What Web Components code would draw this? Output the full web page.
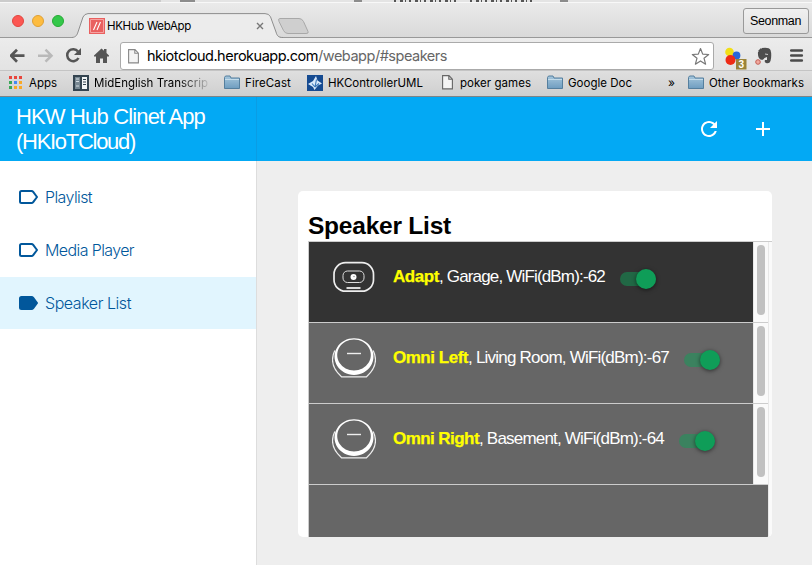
<!DOCTYPE html>
<html lang="en">
<head>
<meta charset="utf-8">
<title>HKHub WebApp</title>
<style>
html,body{margin:0;height:100%;overflow:hidden}
body{width:812px;height:565px;display:flex;flex-direction:column;font-family:Inter,"Liberation Sans",sans-serif;color:#111}
</style>
</head>
<body>
<browser-chrome></browser-chrome>
<hub-app></hub-app>
<script>
// Single-line text that spreads its letters to fill the width given in "w".
class FitText extends HTMLElement{
  connectedCallback(){
    if(!this.shadowRoot)this.attachShadow({mode:'open'}).innerHTML='<style>:host{display:block;flex:none;white-space:pre;width:max-content}</style><slot></slot>';
    this.fit();
    window.addEventListener('load',()=>this.fit());
  }
  fit(){
    this.style.letterSpacing='0px';
    this.style.width='max-content';
    const w=+this.getAttribute('w'),n=this.textContent.length,now=this.getBoundingClientRect().width;
    if(now)this.style.letterSpacing=((w-now)/n).toFixed(3)+'px';
    this.style.width=w+'px';
  }
}
customElements.define('fit-text',FitText);

function define(name,html){
  customElements.define(name,class extends HTMLElement{
    constructor(){super();this.attachShadow({mode:'open'}).innerHTML=typeof html==='function'?html(this):html;}
  });
}

define('folder-icon',`<style>:host{display:block;width:16px;height:15px}svg{display:block}</style>
<svg width="16" height="15" viewBox="0 0 16 15"><defs><linearGradient id="g" x2="0" y2="1"><stop stop-color="#a5c6dc"/><stop offset="1" stop-color="#6f9dc0"/></linearGradient></defs>
<path d="M.5 13.500v-11l1-1.500h4.500l1 2h8.500v10.500z" fill="url(#g)" stroke="#557f9e"/><path d="M1 4.500h14" stroke="#c4dcea"/></svg>`);

define('page-icon',`<style>:host{display:block;width:11px;height:15px}svg{display:block}</style>
<svg width="11" height="15" viewBox="0 0 11 15"><path d="M.6.6H7l3.400 3.500v9.800H.6zM6.800.6v3.700h3.600" fill="#f4f4f4" stroke="var(--ink,#666)" stroke-width="1.1"/></svg>`);

define('tab-strip',`<style>
:host{display:flex;height:38px;background:linear-gradient(#ececec,#d9d9d9);position:relative;box-sizing:border-box;border-bottom:1px solid #999;padding:3px 0 0 12px;align-items:flex-start}
.behind{position:absolute;left:0;top:0;width:812px;height:3px}
.lights{display:flex;gap:8px;margin-top:12px}
i{width:10px;height:10px;border-radius:50%;border:1px solid #e2463f;background:#fc5753}
i+i{background:#fdbc40;border-color:#dfa035}i+i+i{background:#34c84a;border-color:#27aa35}
.shape{position:absolute;left:72px;top:13px}
.tab{display:flex;align-items:center;margin:14px 0 0 25px;height:18px;position:relative}
fit-text{font-size:11.500px;line-height:18px;margin-left:2px;color:#000}
.x{margin-left:65px}
.user{position:absolute;left:743px;top:8px;width:64px;height:24px;border:1px solid #999;border-radius:3px;background:linear-gradient(#f0f0f0,#e1e1e1)}
.user fit-text{margin:1px 0 0 6px;font-size:12.500px;line-height:23px;font-family:"Liberation Sans",sans-serif}
</style>
<svg class="behind" width="812" height="3"><path d="M0 0h161v2H0z" fill="#ccc"/><path d="M161 0h651v2H161z" fill="#e4e4e4"/><path d="M180 0h15v2h-15zM354 0h8v2h-8zM560 0h8v2h-8z" fill="#8c8c8c"/><path d="M394 1h62M470 1h65" stroke="#555" stroke-width="2" stroke-dasharray="2 4 3 2 1 3"/><path d="M0 2.500h812" stroke="#f8f8f8"/></svg>
<div class="lights"><i></i><i></i><i></i></div>
<svg class="shape" width="240" height="26" viewBox="0 0 240 26">
<path d="M0 24.500C4 24.200 5 22 6 19L11 4Q12.500.8 16 .6H193q4 0 5.500 3.200L204 19c1 3.500 2 5.500 7 5.500V26H0z" fill="#ececec"/>
<path d="M0 24.500C4 24.200 5 22 6 19L11 4Q12.500.8 16 .6H193q4 0 5.500 3.200L204 19c1 3.500 2 5.500 7 5.500" fill="none" stroke="#8e8e8e"/>
<path d="M208 5.500h19q3 0 4.500 3l4.500 10q1 2-2 2h-18q-3 0-4.500-3l-4.500-9q-1.300-3 1-3z" fill="#cfcfcf" stroke="#a8a8a8"/></svg>
<div class="tab"><svg width="16" height="16" viewBox="0 0 16 16"><path d="M0 0h16v16H0z" fill="#e9605f"/><path d="M1.500 1.500h13v13h-13z" fill="none" stroke="#f5a3a2"/><path d="M4.500 12L8 4M8 12l3.500-8" stroke="#fff" stroke-width="1.100"/></svg>
<fit-text w="84">HKHub WebApp</fit-text><svg class="x" width="8" height="8" viewBox="0 0 8 8"><path d="M1 1l6 6M7 1L1 7" stroke="#777" stroke-width="1.400"/></svg></div>
<div class="user"><fit-text w="51">Seonman</fit-text></div>`);

define('address-row',`<style>
:host{display:flex;height:32px;padding:3px 0 0 10px;background:linear-gradient(#ececec,#e3e3e3);align-items:flex-start;box-sizing:border-box}
.nav,.ext,.bar{flex:none}
.bar{display:flex;align-items:center;box-sizing:border-box;width:594px;height:28px;margin-top:1px;background:#fff;border:1px solid #aaa;border-radius:3px;padding:0 3px 0 7px}
page-icon{--ink:#888;margin-right:8px}
.url{display:flex;font-size:14.500px;line-height:24px;color:#000}
.path{color:#666}
.star{margin-left:auto}
.ext{margin-left:11px}
</style>
<svg class="nav" width="110" height="28" viewBox="10 41 110 28">
<path d="M24.500 55.700H11.500M17 49.700l-6 6 6 6" fill="none" stroke="#555" stroke-width="2.700"/>
<path d="M38 55.700h13M45.500 49.700l6 6-6 6" fill="none" stroke="#b9b9b9" stroke-width="2.500"/>
<path d="M78 51.500A6 6 0 1 0 78.500 58" fill="none" stroke="#555" stroke-width="2.500"/><path d="M81 48v7h-7z" fill="#555"/>
<path d="M94 55.500l7.500-7 2.500 2.300V49h2.500v4l2.500 2.500v1h-2V63h-4v-4.500h-3V63h-4v-6.500h-2z" fill="#555"/></svg>
<div class="bar"><page-icon></page-icon><div class="url"><fit-text w="171">hkiotcloud.herokuapp.com</fit-text><fit-text class="path" w="129">/webapp/#speakers</fit-text></div>
<svg class="star" width="19" height="19" viewBox="0 0 19 19"><path d="M9.500 1.500l2.200 5.600 6 .4-4.700 3.700 1.600 6-5.100-3.300-5.100 3.300 1.600-6L1.300 7.500l6-.4z" fill="#fff" stroke="#777" stroke-width="1.200" stroke-linejoin="round"/></svg></div>
<svg class="ext" width="84" height="30" viewBox="725 41 84 30">
<circle cx="729.500" cy="52" r="4.300" fill="#f1df17"/><circle cx="736.500" cy="55.500" r="3.900" fill="#2867d8"/><circle cx="730.500" cy="60" r="5" fill="#ee2b16"/>
<path d="M736 59h10.500v10.500H736z" fill="#9a8439"/><text x="738.500" y="68" font-size="10" font-weight="700" fill="#fff" font-family="Liberation Sans">3</text>
<path d="M758 52l4-4q7-1 8.500 2 1.500 5 0 11-1 3-4.500 2-2-1-1-3h2v-3l-2.500 1q-1 2.500-4 1.500-3-2-2.500-7.500z" fill="#4d4d4d"/><path d="M758 51l3-3v3z" fill="#4d4d4d"/><path d="M765 54l3 .5" stroke="#ccc"/><circle cx="758" cy="62" r="2.300" fill="#f0aaa0" stroke="#c45e54"/>
<path d="M791.300 50.500h10.500M791.300 55.500h10.500M791.300 60.500h10.500" stroke="#4b4b4b" stroke-width="2.700" stroke-linecap="round"/></svg>`);

define('bookmarks-bar',`<style>
:host{display:grid;grid-template-columns:73px 151px 83px 135px 105px 121px 20px 1fr;height:27px;box-sizing:border-box;padding:0 0 2px 9px;background:linear-gradient(#dfdfdf,#cfcfcf);border-top:1px solid #c4c4c4;border-bottom:1px solid #7e8486;align-items:center;font-size:11.500px;color:#000;line-height:20px}
div{display:flex;align-items:center}
.near{gap:5px;margin-left:-9px}
.fade{-webkit-mask-image:linear-gradient(90deg,#000 75%,rgba(0,0,0,.12))}
</style>
<div style="gap:7px"><svg width="13" height="13" viewBox="0 0 13 13"><path d="M0 0h3v3H0zM5 0h3v3H5zM10 0h3v3h-3z" fill="#e8453c"/><path d="M0 5h3v3H0z" fill="#3aa757"/><path d="M5 5h3v3H5z" fill="#4688f1"/><path d="M10 5h3v3h-3z" fill="#f9a825"/><path d="M0 10h3v3H0z" fill="#3aa757"/><path d="M5 10h3v3H5zM10 10h3v3h-3z" fill="#f9a825"/></svg><fit-text w="28">Apps</fit-text></div>
<div class="near"><svg width="16" height="16" viewBox="0 0 16 16"><path d="M0 0h16v16H0z" fill="#344450"/><path d="M2 2h5v12H2z" fill="#788893"/><path d="M9 2h5v12H9z" fill="#f1f4f5"/><path d="M3 4h3M3 6.500h3M3 11h3" stroke="#d5dde2"/><path d="M10 4.500h3M10 7h3M10 9.500h3" stroke="#344450"/></svg><fit-text class="fade" w="114">MidEnglish Transcrip</fit-text></div>
<div class="near"><folder-icon></folder-icon><fit-text w="46">FireCast</fit-text></div>
<div class="near"><svg width="16" height="16" viewBox="0 0 16 16"><path d="M0 0h16v16H0z" fill="#164b91"/><path d="M9 1l1.500 4.500 4.500 3-4 2-3.500 4.500-1.500-3-5-3 5-3z" fill="#d8e8fa"/><path d="M9.500 4.500L8 12M8 12L5 8.500M8 12l4-3.500" fill="none" stroke="#3976b8" stroke-width="1.100"/></svg><fit-text w="95">HKControllerUML</fit-text></div>
<div class="near" style="gap:7px"><page-icon></page-icon><fit-text w="71">poker games</fit-text></div>
<div class="near"><folder-icon></folder-icon><fit-text w="64">Google Doc</fit-text></div>
<div class="near"><fit-text style="font-size:12px" w="9">»</fit-text></div>
<div class="near"><folder-icon></folder-icon><fit-text w="95">Other Bookmarks</fit-text></div>`);

define('browser-chrome',`<style>:host{display:flex;flex-direction:column;height:97px;flex:none}</style>
<tab-strip></tab-strip><address-row></address-row><bookmarks-bar></bookmarks-bar>`);

define('nav-item',el=>`<style>
:host{display:flex;height:52px;align-items:center;padding-left:19px;gap:7px;color:#01579b;font-size:16px;font-weight:300;line-height:24px}
:host([active]){background:#e1f5fe}svg{display:block;flex:none}
</style><svg width="19" height="14" viewBox="0 0 19 14"><path d="M2.500 1h10q1 0 1.700.9L18 7l-3.800 5.100q-.7.9-1.700.9h-10Q1 13 1 11.500v-9Q1 1 2.500 1z" fill="${el.hasAttribute('active')?'#01579b':'none'}" stroke="#01579b" stroke-width="2"/></svg><slot></slot>`);

define('power-toggle',`<style>:host{display:flex;align-items:center;width:36px;height:20px}
.track{width:36px;height:14px;border-radius:7px;background:rgba(15,157,88,.5);display:flex;align-items:center;justify-content:flex-end}
.knob{width:20px;height:20px;border-radius:50%;background:#0f9d58;box-shadow:0 1px 4px rgba(0,0,0,.55);flex:none}</style><div class="track"><div class="knob"></div></div>`);

const art={
adapt:`<rect x="2" y="5.700" width="39.500" height="28.500" rx="11.500" fill="none" stroke="#eee" stroke-width="1.700"/><rect x="11" y="14" width="21" height="11.500" rx="4.500" fill="none" stroke="#ddd" stroke-width="1"/><circle cx="21.500" cy="20" r="3" fill="#fff"/><circle cx="22" cy="19.500" r=".7" fill="#888"/><path d="M14.500 31h14" stroke="#eee" stroke-width="1.800"/>`,
omni:`<path fill-rule="evenodd" d="M22 .2a19.500 18.400 0 1 1-.01 0zM22 1.500a16.800 15.500 0 1 0 .01 0z" fill="#fff"/><path d="M2.800 12.500Q-4 26.500 9.500 38.800h25Q48 26.500 41.200 12.500" fill="none" stroke="#eee" stroke-width="1.200"/><path d="M15 15.500h14" stroke="#eee" stroke-width="1.400"/>`};

define('speaker-row',el=>`<style>
:host{display:grid;grid-template-columns:444px 15px;height:80px;border-bottom:1px solid #ccc;background:#666;color:#fff}
:host([selected]){background:#333}
.body{display:flex;align-items:flex-start;padding:15px 0 0 23px}
svg{flex:none}
.label{display:flex;margin:8px 15px 0 17px;font:17px/24px "Liberation Sans",sans-serif}
.name{color:#ff0;font-weight:700;-webkit-text-stroke:.25px #ff0}
power-toggle{margin-top:12px}
.scroll{background:#fafafa;border-left:1px solid #e8e8e8;box-sizing:border-box;padding:3px 0 0 3px}
.thumb{width:8px;height:70px;border-radius:4px;background:#c1c1c1}
</style><div class="body"><svg width="44" height="42" viewBox="0 0 44 42">${art[el.getAttribute('kind')]}</svg>
<div class="label"><fit-text class="name" w="${el.getAttribute('name-width')}">${el.getAttribute('name')}</fit-text><fit-text w="${el.getAttribute('info-width')}">${el.getAttribute('info')}</fit-text></div><power-toggle></power-toggle></div>
<div class="scroll"><div class="thumb"></div></div>`);

define('speaker-card',`<style>
:host{display:flex;flex-direction:column;box-sizing:border-box;width:474px;height:346px;margin:30px 0 0 41px;padding:20px 0 0 10px;background:#fff;border-radius:5px;overflow:hidden}
h2{margin:0;font:700 24.500px/30px "Liberation Sans",sans-serif;color:#000;height:30px}
.list{flex:1;border-top:1px solid #ccc;border-left:1px solid #ccc;background:linear-gradient(90deg,#666 459px,#e8e8e8 459px 460px,#fafafa 460px)}
.list{display:flex;flex-direction:column;align-items:flex-start}
speaker-row{flex:none}
</style><h2><fit-text w="143">Speaker List</fit-text></h2><div class="list">
<speaker-row selected kind="adapt" name="Adapt" name-width="46" info=", Garage, WiFi(dBm):-62" info-width="166"></speaker-row>
<speaker-row kind="omni" name="Omni Left" name-width="75" info=", Living Room, WiFi(dBm):-67" info-width="201"></speaker-row>
<speaker-row kind="omni" name="Omni Right" name-width="86" info=", Basement, WiFi(dBm):-64" info-width="185"></speaker-row></div>`);

define('hub-app',`<style>
:host{display:grid;grid-template-columns:256px 1fr;grid-template-rows:64px 404px;flex:none;background:#eee}
.title{background:#03a9f4;color:#fff;font:22px/25px "Liberation Sans",sans-serif;padding:7px 0 0 16px;display:flex;flex-direction:column}
.tools{background:#03a9f4;border-left:1px solid #0a9de4;display:flex;align-items:center;justify-content:flex-end;gap:30px;padding-right:37px}
nav{background:#fff;padding-top:10px;display:flex;flex-direction:column;gap:1px}
main{border-left:1px solid #ddd;display:block;min-width:0}
</style>
<div class="title"><fit-text w="189">HKW Hub Clinet App</fit-text><fit-text w="119">(HKIoTCloud)</fit-text></div>
<div class="tools"><svg width="24" height="24" viewBox="0 0 24 24"><path fill="#fff" d="M17.650 6.350C16.200 4.900 14.210 4 12 4c-4.420 0-7.990 3.580-7.990 8s3.570 8 7.990 8c3.730 0 6.840-2.550 7.730-6h-2.080c-.82 2.330-3.040 4-5.650 4-3.310 0-6-2.690-6-6s2.690-6 6-6c1.660 0 3.140.69 4.220 1.780L13 11h7V4l-2.350 2.350z"/></svg><svg width="24" height="24" viewBox="0 0 24 24"><path fill="#fff" d="M19 13h-6v6h-2v-6H5v-2h6V5h2v6h6v2z"/></svg></div>
<nav><nav-item><fit-text w="47">Playlist</fit-text></nav-item><nav-item><fit-text w="89">Media Player</fit-text></nav-item><nav-item active><fit-text w="86">Speaker List</fit-text></nav-item></nav>
<main><speaker-card></speaker-card></main>`);
</script>
</body>
</html>
